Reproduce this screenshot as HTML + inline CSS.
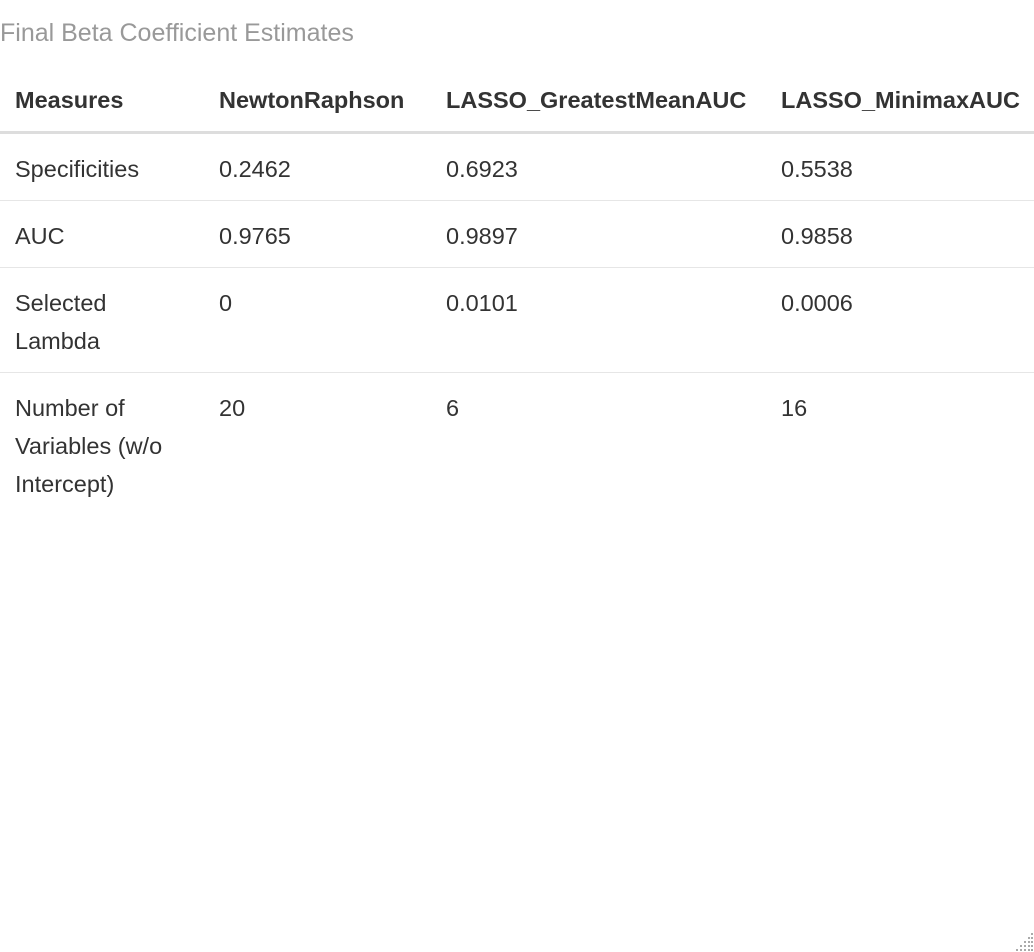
<!DOCTYPE html>
<html><head><meta charset="utf-8"><style>
body{margin:0;width:1034px;height:952px;background:#fff;font-family:"Liberation Sans",sans-serif;color:#333;position:relative;overflow:hidden}
.t{position:absolute;font-size:23.5px;line-height:38px;white-space:nowrap}
.b{font-weight:bold}
.l{position:absolute;left:0;width:1034px;background:#e6e6e6;height:1px}
</style></head><body>
<div class="t" style="left:0;top:14px;color:#999;font-size:25px">Final Beta Coefficient Estimates</div>
<div class="t b" style="left:15px;top:81px">Measures</div>
<div class="t b" style="left:219px;top:81px">NewtonRaphson</div>
<div class="t b" style="left:446px;top:81px">LASSO_GreatestMeanAUC</div>
<div class="t b" style="left:781px;top:81px">LASSO_MinimaxAUC</div>
<div class="l" style="top:131px;height:3px;background:#ddd"></div>
<div class="t" style="left:15px;top:150px">Specificities</div>
<div class="t" style="left:219px;top:150px">0.2462</div>
<div class="t" style="left:446px;top:150px">0.6923</div>
<div class="t" style="left:781px;top:150px">0.5538</div>
<div class="l" style="top:200px"></div>
<div class="t" style="left:15px;top:217px">AUC</div>
<div class="t" style="left:219px;top:217px">0.9765</div>
<div class="t" style="left:446px;top:217px">0.9897</div>
<div class="t" style="left:781px;top:217px">0.9858</div>
<div class="l" style="top:267px"></div>
<div class="t" style="left:15px;top:284px">Selected<br>Lambda</div>
<div class="t" style="left:219px;top:284px">0</div>
<div class="t" style="left:446px;top:284px">0.0101</div>
<div class="t" style="left:781px;top:284px">0.0006</div>
<div class="l" style="top:372px"></div>
<div class="t" style="left:15px;top:389px">Number of<br>Variables (w/o<br>Intercept)</div>
<div class="t" style="left:219px;top:389px">20</div>
<div class="t" style="left:446px;top:389px">6</div>
<div class="t" style="left:781px;top:389px">16</div>
<svg style="position:absolute;left:1012px;top:930px" width="22" height="22"><g fill="#aaa"><rect x="19" y="3" width="2" height="2"/><rect x="16" y="7" width="2" height="2"/><rect x="19" y="7" width="2" height="2"/><rect x="12" y="11" width="2" height="2"/><rect x="16" y="11" width="2" height="2"/><rect x="19" y="11" width="2" height="2"/><rect x="8" y="15" width="2" height="2"/><rect x="12" y="15" width="2" height="2"/><rect x="16" y="15" width="2" height="2"/><rect x="19" y="15" width="2" height="2"/><rect x="4" y="19" width="2" height="2"/><rect x="8" y="19" width="2" height="2"/><rect x="12" y="19" width="2" height="2"/><rect x="16" y="19" width="2" height="2"/><rect x="19" y="19" width="2" height="2"/></g></svg>
</body></html>
